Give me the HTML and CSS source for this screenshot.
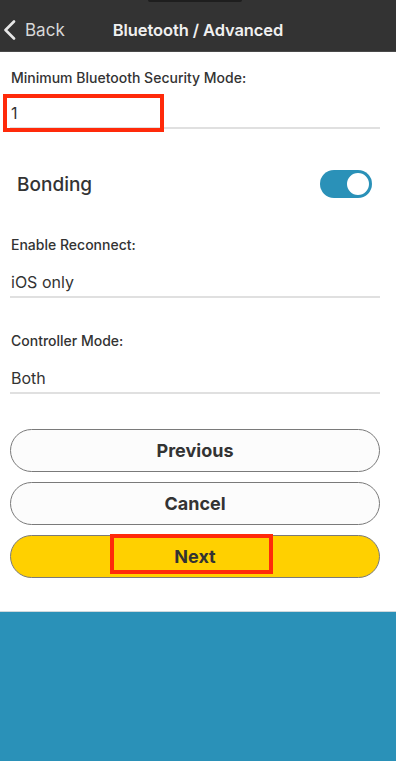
FILE: index.html
```html
<!DOCTYPE html>
<html>
   <head>
      <meta name="viewport" content="width=device-width, initial-scale=1">
      <link rel="stylesheet" href="styles.css">
   </head>
   <body>
      <header class="topbar">
        <a class="back" href="#">
          <svg class="chevron" width="13" height="20" viewBox="0 0 13 20">
            <path d="M11 1.5 L2.5 10 L11 18.5" fill="none" stroke="#e6e6e6" stroke-width="2.6" stroke-linecap="round" stroke-linejoin="round"/>
          </svg>
          <span>Back</span>
        </a>
        <h1 class="title">Bluetooth / Advanced</h1>
        <span></span>
      </header>

      <main class="form">
        <div class="field">
          <label class="label">Minimum Bluetooth Security Mode:</label>
          <div class="value">
            1
            <span class="mark mark-value"></span>
          </div>
        </div>

        <div class="switch-row">
          <span class="switch-label">Bonding</span>
          <span class="toggle on"><span class="knob"></span></span>
        </div>

        <div class="field field-gap">
          <label class="label">Enable Reconnect:</label>
          <div class="value">iOS only</div>
        </div>

        <div class="field field-gap2">
          <label class="label">Controller Mode:</label>
          <div class="value">Both</div>
        </div>

        <div class="buttons">
          <button class="btn">Previous</button>
          <button class="btn">Cancel</button>
          <button class="btn btn-next">
            Next
            <span class="mark mark-next"></span>
          </button>
        </div>
      </main>

      <footer class="bottom"></footer>
   </body>
</html>
```

FILE: styles.css
```css
body {
  margin: 0;
  font-family: Inter, "Liberation Sans", Arial, sans-serif;
  color: #333;
  background: #fff;
}

.topbar {
  position: relative;
  height: 52px;
  background-color: #333;
  display: grid;
  grid-template-columns: 1fr auto 1fr;
  align-items: center;
  border-bottom: 1px solid #4a4a4a;
  box-sizing: border-box;
}

.topbar::before {
  content: "";
  position: absolute;
  top: 0;
  left: 148px;
  width: 94px;
  height: 2px;
  border-radius: 0 0 4px 4px;
  background: #1e1e1e;
}

.back {
  display: flex;
  align-items: center;
  gap: 9px;
  padding-left: 3px;
  color: #d8d8d8;
  font-size: 17px;
  text-decoration: none;
  margin-top: 9px;
}

.title {
  margin: 9px 0 0 0;
  color: #f0f0f0;
  font-size: 16.5px;
  font-weight: 600;
  letter-spacing: -0.1px;
}

.form {
  padding: 0 16px 0 10px;
}

.field {
  padding-top: 16px;
}

.field-gap {
  padding-top: 35px;
}

.field-gap2 {
  padding-top: 33px;
}

.label {
  display: block;
  font-size: 14px;
  font-weight: 500;
  line-height: 20px;
  padding-left: 1px;
}

.value {
  position: relative;
  font-size: 16px;
  line-height: 24px;
  padding: 13px 0 2px 1px;
  border-bottom: 2.5px solid #e0e0e0;
}

.field-gap .value,
.field-gap2 .value {
  padding-top: 15px;
}

.mark {
  position: absolute;
  border: 4px solid #ff2a0a;
  box-sizing: border-box;
  pointer-events: none;
}

.mark-value {
  left: -7px;
  top: 6px;
  width: 161px;
  height: 38px;
}

.switch-row {
  display: flex;
  align-items: center;
  justify-content: space-between;
  height: 32px;
  margin-top: 39px;
  padding: 0 8px 0 7px;
}

.switch-label {
  font-size: 19px;
  font-weight: 500;
}

.toggle {
  position: relative;
  width: 52px;
  height: 28px;
  border-radius: 14px;
  background: #2a91b8;
}

.toggle .knob {
  position: absolute;
  top: 1px;
  right: 1px;
  width: 22px;
  height: 22px;
  border: 2px solid #2a91b8;
  border-radius: 50%;
  background: #fff;
}

.buttons {
  display: flex;
  flex-direction: column;
  gap: 10px;
  margin-top: 35px;
}

.btn {
  position: relative;
  height: 43px;
  border: 1.5px solid #7a7a7a;
  border-radius: 22px;
  background: #fcfcfc;
  font-family: inherit;
  font-size: 18px;
  font-weight: 700;
  color: #333;
  cursor: pointer;
}

.btn-next {
  background: #ffd000;
}

.mark-next {
  left: 99px;
  top: -2px;
  width: 163px;
  height: 40px;
}

.bottom {
  margin-top: 33px;
  height: 150px;
  background: #2a91b8;
  border-top: 1px solid #cfd8dc;
}
```
